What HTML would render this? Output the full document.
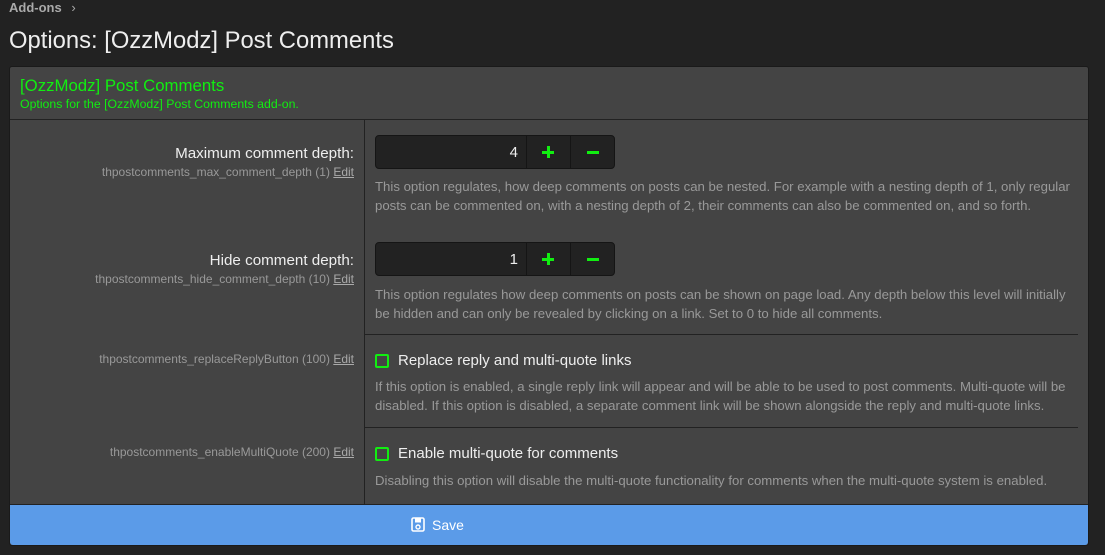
<!DOCTYPE html>
<html><head><meta charset="utf-8"><style>
*{margin:0;padding:0;box-sizing:border-box}
body{width:1105px;height:555px;background:#222;font-family:"Liberation Sans",sans-serif;position:relative;overflow:hidden;color:#ddd}
.a{position:absolute;white-space:nowrap}
.n{font-family:"Liberation Sans Narrow","Liberation Sans",sans-serif}
.panel{position:absolute;left:9px;top:66px;width:1080px;height:480px;background:#444;border:1px solid #1a1a1a;border-radius:3px}
.hl{position:absolute;height:1px;background:#222}
.vl{position:absolute;width:1px;background:#222}
.lab{right:751px;font-size:15.2px;color:#eee;text-align:right}
.key{font-size:12px;color:#999;text-align:right;right:751px}
.key u{color:#aaa}
.ex{font-size:13.2px;color:#999;line-height:19px;left:375px}
.spin{position:absolute;left:375px;width:240px;height:34px;background:#222;border:1px solid #151515;border-radius:4px}
.spin .v{position:absolute;right:96px;top:8px;font-size:15px;color:#eee}
.spin .d1{position:absolute;left:150px;top:0;width:1px;height:32px;background:#151515}
.spin .d2{position:absolute;left:194px;top:0;width:1px;height:32px;background:#151515}
.pl{position:absolute;left:166px;top:10px;width:12px;height:12px}
.pl:before{content:"";position:absolute;left:5px;top:0;width:3px;height:12px;background:#1e1}
.pl:after,.mi:after{content:"";position:absolute;left:0;top:5px;width:12px;height:3px;background:#1e1}
.mi{position:absolute;left:211px;top:10px;width:12px;height:12px}
.cb{position:absolute;left:375px;width:14px;height:14px;border:2px solid #1e1;border-radius:2px}
.cl{left:398px;font-size:15px;color:#eee}
</style></head><body>
<div class="a" style="left:9px;top:0px;font-size:13px;font-weight:bold;color:#aaa">Add-ons <span style="font-weight:normal;margin-left:6px">›</span></div>
<div class="a" style="left:9px;top:27px;font-size:23.8px;color:#eee">Options: [OzzModz] Post Comments</div>
<div class="panel"></div>
<div class="a" style="left:20px;top:76px;font-size:16.8px;color:#1e1">[OzzModz] Post Comments</div>
<div class="a" style="left:20px;top:97px;font-size:12.3px;color:#1e1">Options for the [OzzModz] Post Comments add-on.</div>
<div class="hl" style="left:10px;top:119px;width:1078px"></div>
<div class="vl" style="left:364px;top:120px;height:384px"></div>

<div class="a lab" style="top:145px">Maximum comment depth:</div>
<div class="a key n" style="top:165px">thpostcomments_max_comment_depth (1) <u>Edit</u></div>
<div class="spin" style="top:135px"><span class="v">4</span><i class="d1"></i><i class="d2"></i><i class="pl"></i><i class="mi"></i></div>
<div class="a ex n" style="top:177px">This option regulates, how deep comments on posts can be nested. For example with a nesting depth of 1, only regular<br>posts can be commented on, with a nesting depth of 2, their comments can also be commented on, and so forth.</div>

<div class="a lab" style="top:252px">Hide comment depth:</div>
<div class="a key n" style="top:272px">thpostcomments_hide_comment_depth (10) <u>Edit</u></div>
<div class="spin" style="top:242px"><span class="v">1</span><i class="d1"></i><i class="d2"></i><i class="pl"></i><i class="mi"></i></div>
<div class="a ex n" style="top:285px">This option regulates how deep comments on posts can be shown on page load. Any depth below this level will initially<br>be hidden and can only be revealed by clicking on a link. Set to 0 to hide all comments.</div>

<div class="hl" style="left:365px;top:334px;width:713px"></div>
<div class="a key n" style="top:352px">thpostcomments_replaceReplyButton (100) <u>Edit</u></div>
<div class="cb" style="top:354px"></div>
<div class="a cl n" style="top:352px">Replace reply and multi-quote links</div>
<div class="a ex n" style="top:377px">If this option is enabled, a single reply link will appear and will be able to be used to post comments. Multi-quote will be<br>disabled. If this option is disabled, a separate comment link will be shown alongside the reply and multi-quote links.</div>

<div class="hl" style="left:365px;top:427px;width:713px"></div>
<div class="a key n" style="top:445px">thpostcomments_enableMultiQuote (200) <u>Edit</u></div>
<div class="cb" style="top:447px"></div>
<div class="a cl n" style="top:445px">Enable multi-quote for comments</div>
<div class="a ex n" style="top:471px">Disabling this option will disable the multi-quote functionality for comments when the multi-quote system is enabled.</div>

<div style="position:absolute;left:10px;top:504px;width:1078px;height:41px;background:#5b9be8;border-top:1px solid #222;border-radius:0 0 3px 3px"></div>
<svg class="a" style="left:411px;top:517px" width="14" height="15" viewBox="0 0 14 15"><rect x="1" y="1" width="12" height="13" rx="1.5" fill="none" stroke="#fff" stroke-width="1.6"/><rect x="4" y="1.5" width="6" height="4" fill="#fff"/><circle cx="7" cy="10" r="2" fill="none" stroke="#fff" stroke-width="1.4"/></svg>
<div class="a n" style="left:432px;top:517px;font-size:14px;color:#fff">Save</div>
</body></html>
